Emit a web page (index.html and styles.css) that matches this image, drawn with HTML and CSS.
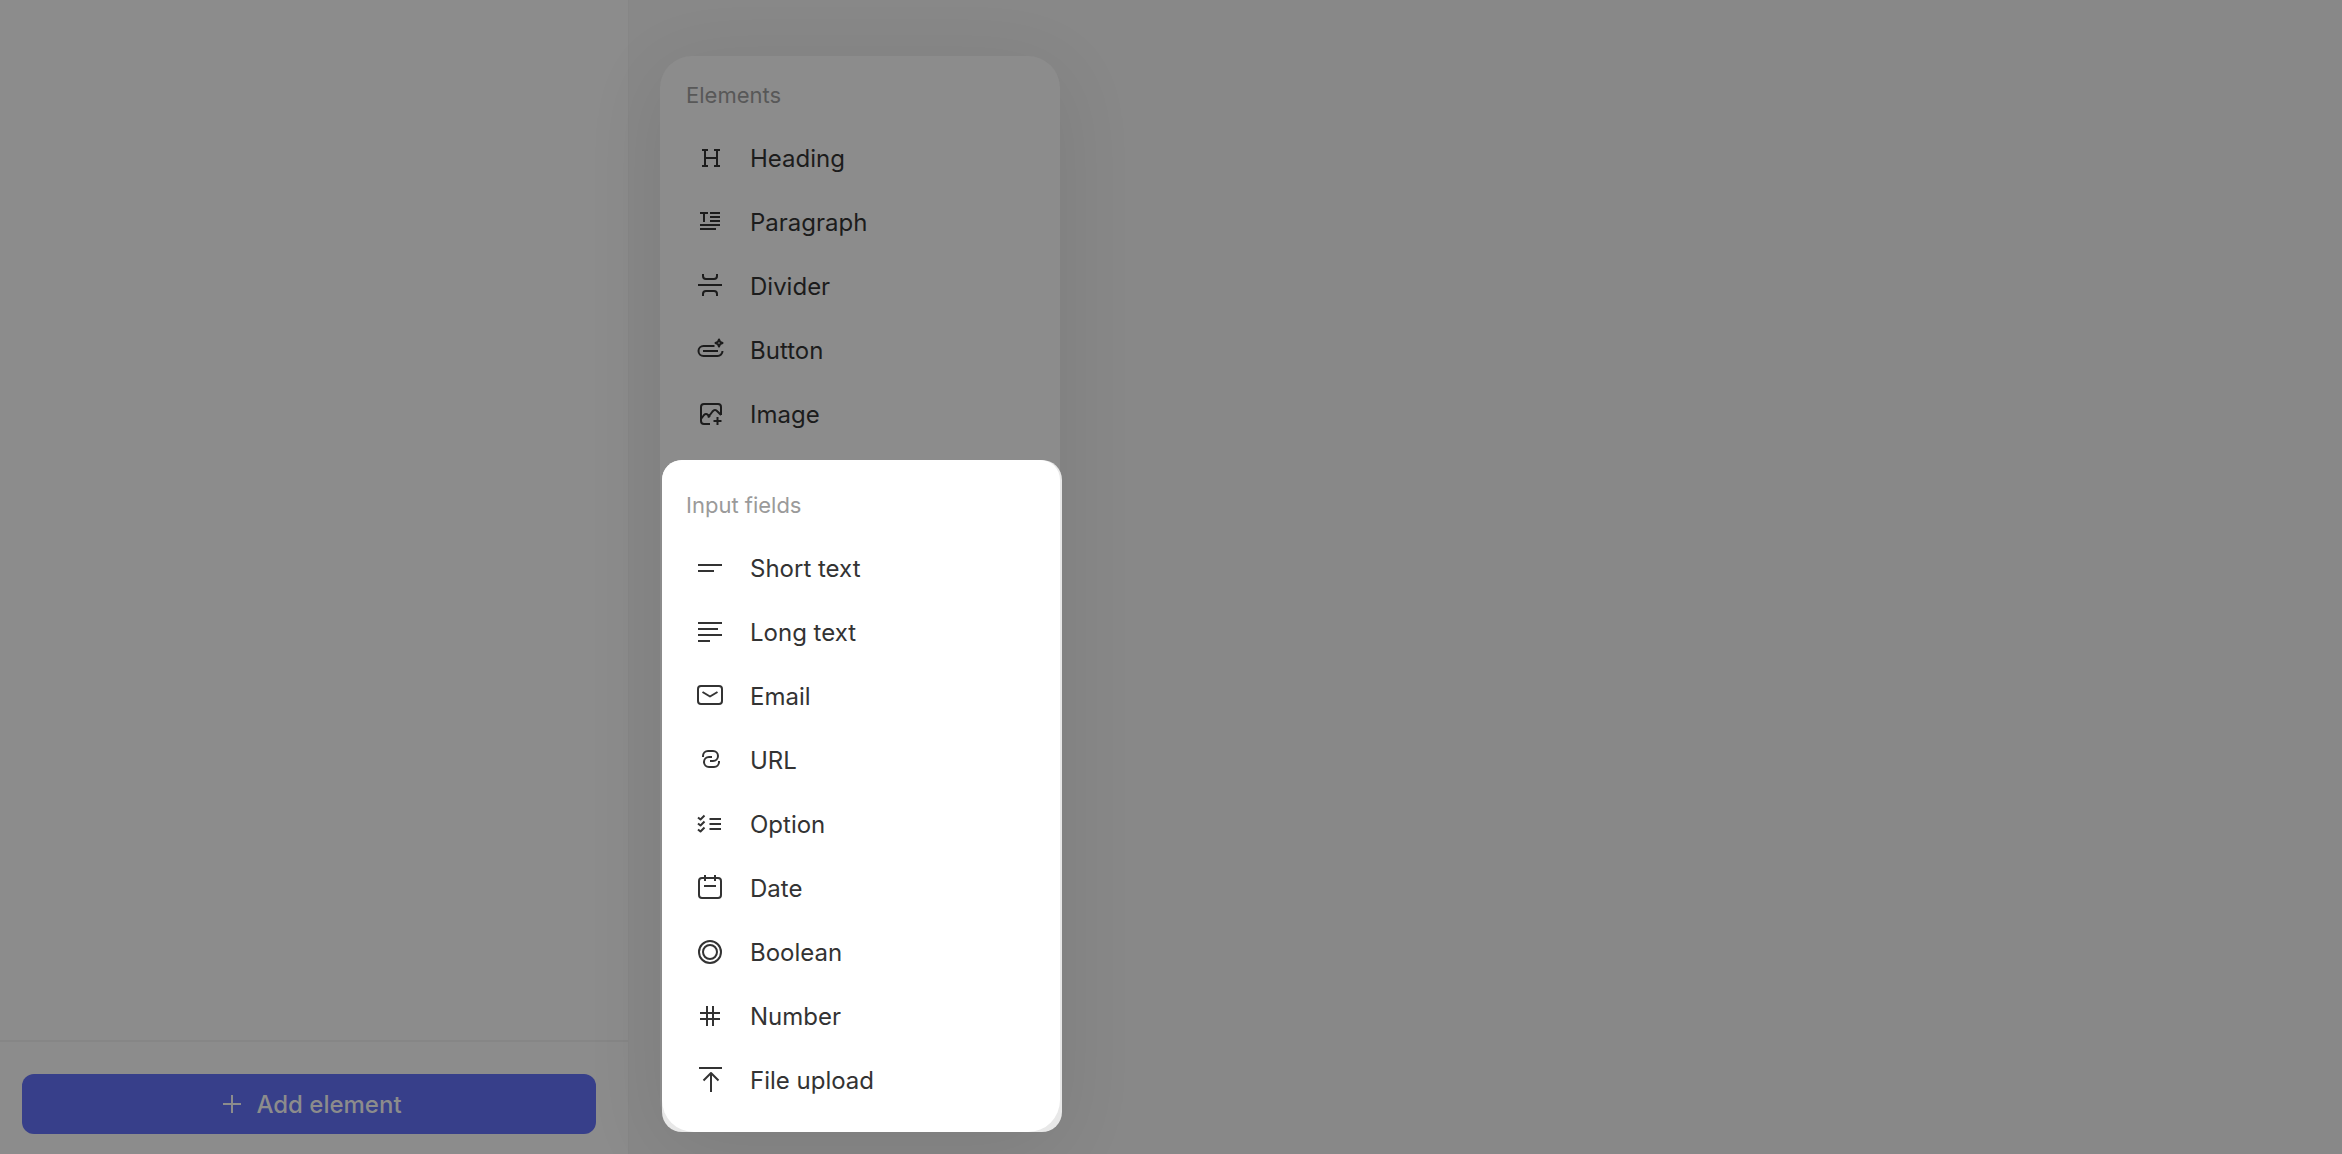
FILE: index.html
```html
<!DOCTYPE html>
<html lang="en">
  <head>
    <meta charset="UTF-8" />
    <meta name="viewport" content="width=device-width, initial-scale=1.0" />
    <title>Form builder</title>
    <link rel="stylesheet" href="styles.css">
  </head>
  <body>
    <aside class="sidebar">
      <div class="sidebar-footer">
        <button class="add-btn">
          <svg class="add-icon" viewBox="0 0 20 20"><path d="M10 1v18M1 10h18"/></svg>
          Add element
        </button>
      </div>
    </aside>
    <main class="canvas">
      <div class="menu">
        <section class="menu-group">
          <h2 class="menu-title">Elements</h2>
          <button class="menu-item">
            <svg class="icon" viewBox="0 0 32 32"><path d="M8 8h6M20 8h6M8 24h6M20 24h6M11 8v16M23 8v16M11 16h12"/></svg>
            Heading
          </button>
          <button class="menu-item">
            <svg class="icon" viewBox="0 0 32 32"><path d="M6 7h8M10 7v9M16 7h10M16 11h10M16 15h10M6 19h20M6 23h16"/></svg>
            Paragraph
          </button>
          <button class="menu-item">
            <svg class="icon" viewBox="0 0 32 32"><path d="M4 15h24M9 4v2a3 3 0 0 0 3 3h8a3 3 0 0 0 3-3V4M9 26v-2a3 3 0 0 1 3-3h8a3 3 0 0 1 3 3v2"/></svg>
            Divider
          </button>
          <button class="menu-item">
            <svg class="icon" viewBox="0 0 32 32"><path d="M20.500 12H9.500a5 5 0 0 0 0 10h14a5 5 0 0 0 5-5M9 17h15"/><path d="M25 5.500l1.100 2.400 2.400 1.100-2.400 1.100L25 12.500l-1.100-2.400L21.500 9l2.400-1.100z"/></svg>
            Button
          </button>
          <button class="menu-item">
            <svg class="icon" viewBox="0 0 32 32"><path d="M16 26H10a3 3 0 0 1-3-3V9a3 3 0 0 1 3-3h14a3 3 0 0 1 3 3v8M7 21l3-4q2-2 4 0l2 2M14 19.500l4.500-6q2.500-3 5 0L27 17M23.500 19v8M19.500 23h8"/></svg>
            Image
          </button>
        </section>
        <section class="menu-group spotlight">
          <div class="spotlight-body">
            <h2 class="menu-title">Input fields</h2>
            <button class="menu-item">
              <svg class="icon" viewBox="0 0 32 32"><path d="M4 13h24M4 19h16"/></svg>
              Short text
            </button>
            <button class="menu-item">
              <svg class="icon" viewBox="0 0 32 32"><path d="M4 7h24M4 13h20M4 19h24M4 25h12"/></svg>
              Long text
            </button>
            <button class="menu-item">
              <svg class="icon" viewBox="0 0 32 32"><rect x="4" y="6" width="24" height="18" rx="3"/><path d="M8.500 12l7.500 4.500 7.500-4.500"/></svg>
              Email
            </button>
            <button class="menu-item">
              <svg class="icon" viewBox="0 0 32 32"><path d="M9 13v-1a5 5 0 0 1 5-5h5a5 5 0 0 1 0 10h-3M25 17v1a5 5 0 0 1-5 5h-5a5 5 0 0 1 0-10h3"/></svg>
              URL
            </button>
            <button class="menu-item">
              <svg class="icon" viewBox="0 0 32 32"><path d="M4 9.500l2.500 2 4-4M4 15.500l2.500 2 4-4M4 21.500l2.500 2 4-4M15.500 11H27M15.500 16H27M15.500 21H27"/></svg>
              Option
            </button>
            <button class="menu-item">
              <svg class="icon" viewBox="0 0 32 32"><rect x="5" y="6" width="22" height="20" rx="3"/><path d="M11 3v6M21 3v6M10 14h12"/></svg>
              Date
            </button>
            <button class="menu-item">
              <svg class="icon" viewBox="0 0 32 32"><circle cx="16" cy="16" r="11"/><circle cx="16" cy="16" r="7"/></svg>
              Boolean
            </button>
            <button class="menu-item">
              <svg class="icon" viewBox="0 0 32 32"><path d="M13 6v20M19 6v20M6 13h20M6 19h20"/></svg>
              Number
            </button>
            <button class="menu-item">
              <svg class="icon" viewBox="0 0 32 32"><path d="M5 4h23M17 9v19M9.500 16.500L17 9l7.500 7.500"/></svg>
              File upload
            </button>
          </div>
        </section>
      </div>
    </main>
  </body>
</html>
```
FILE: styles.css
```css
*{
  box-sizing: border-box;
}
body{
  margin: 0;
  min-height: 100vh;
  display: flex;
  background-color: #888888;
  font-family: Inter, "Liberation Sans", sans-serif;
  font-size: 24px;
}
button{
  border: none;
  font: inherit;
  cursor: pointer;
}
svg{
  fill: none;
  stroke: currentColor;
  stroke-width: 2;
}
.sidebar{
  width: 629px;
  flex-shrink: 0;
  display: flex;
  flex-direction: column;
  justify-content: flex-end;
  background-color: #8c8c8c;
  border-right: 1px solid #868686;
}
.sidebar-footer{
  padding: 32px 32px 20px 22px;
  border-top: 2px solid #868686;
}
.add-btn{
  width: 100%;
  height: 60px;
  display: flex;
  align-items: center;
  justify-content: center;
  gap: 14px;
  padding: 0 0 0 6px;
  background-color: #373f8a;
  color: #8c8c8c;
  border-radius: 12px;
  font-weight: 500;
}
.add-icon{
  width: 20px;
  height: 20px;
}
.canvas{
  flex: 1;
  padding: 56px 31px 20px;
}
.menu{
  width: 400px;
  background-color: #8c8c8c;
  border-radius: 32px;
  box-shadow: 0 16px 80px rgba(0, 0, 0, 0.09);
  color: #1c1c1c;
}
.menu-group{
  padding: 16px 0 14px;
}
.menu-title{
  margin: 0 0 8px;
  padding: 0 26px;
  font-size: 22px;
  font-weight: 400;
  line-height: 46px;
  color: #585858;
}
.menu-item{
  width: 100%;
  height: 64px;
  display: flex;
  align-items: center;
  gap: 24px;
  padding: 0 34px;
  background-color: transparent;
  color: inherit;
  text-align: left;
}
.icon{
  width: 32px;
  height: 32px;
  stroke-linejoin: round;
}
/* highlighted part of the menu, sits slightly off the panel behind it */
.spotlight{
  margin: 0 -2px 0 2px;
  padding: 0 2px 0 0;
  background-color: #e8e8e8;
  border-radius: 20px;
  color: #333333;
}
.spotlight-body{
  padding: 22px 0 20px;
  background-color: white;
  border-radius: 20px 20px 32px 32px;
}
.spotlight .menu-title{
  padding: 0 24px;
  color: #9a9a9a;
}
.spotlight .menu-item{
  padding: 0 32px;
}
```
